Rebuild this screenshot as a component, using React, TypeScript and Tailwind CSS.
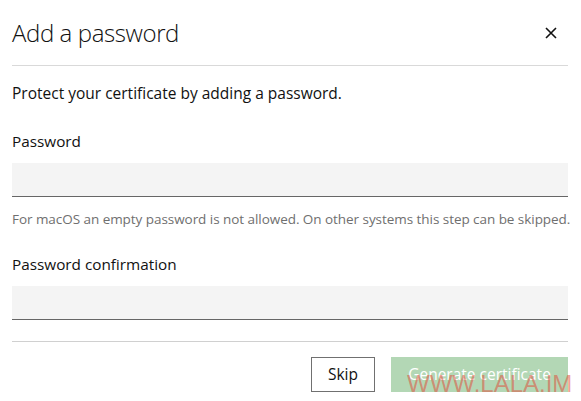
const App = () => {
  return (
    <div
      className="relative w-[581px] h-[401px] bg-white pl-3 pr-[13px] text-[#111] overflow-hidden"
      style={{ fontFamily: '"Open Sans", "Noto Sans", sans-serif' }}
    >
      {/* Header */}
      <div className="h-[66px] flex items-center justify-between border-b border-[#d9d9d9]">
        <h1 className="text-[24px] font-light leading-none tracking-[-0.4px]">Add a password</h1>
        <button className="w-6 h-6 mr-[5px] flex items-center justify-center">
          <svg className="w-3 h-3" viewBox="0 0 12 12" fill="none" stroke="#111" strokeWidth={1.6}>
            <path d="M1 1l10 10M11 1L1 11" />
          </svg>
        </button>
      </div>

      {/* Body */}
      <p className="mt-[15px] text-[15.5px] leading-6">Protect your certificate by adding a password.</p>

      <label className="block mt-6 text-[15.3px] leading-6">Password</label>
      <div className="mt-[10px] h-[34px] bg-[#f4f4f4] border-b border-[#666]"></div>
      <p className="mt-3 text-[13.5px] leading-5 text-[#6f6f6f] tracking-[-0.05px] whitespace-nowrap">
        For macOS an empty password is not allowed. On other systems this step can be skipped.
      </p>

      <label className="block mt-[23px] text-[15.3px] leading-6">Password confirmation</label>
      <div className="mt-[10px] h-[34px] bg-[#f4f4f4] border-b border-[#666]"></div>

      <div className="mt-[21px] border-t border-[#d0d0d0]"></div>

      {/* Footer */}
      <div className="mt-[15px] flex justify-end gap-4">
        <button className="h-[35px] w-[64px] border border-[#707070] text-[15.5px] bg-white">Skip</button>
        <button className="h-[35px] w-[177px] bg-[#b3d7b5] text-white text-[15.5px]">Generate certificate</button>
      </div>

      {/* Watermark */}
      <div
        className="absolute left-[407px] top-[372px] text-[24px] leading-none text-[#e0503c]/55 whitespace-nowrap pointer-events-none"
        style={{ fontFamily: '"Liberation Sans", sans-serif' }}
      >
        WWW.LALA.IM
      </div>
    </div>
  );
};

export default App;
